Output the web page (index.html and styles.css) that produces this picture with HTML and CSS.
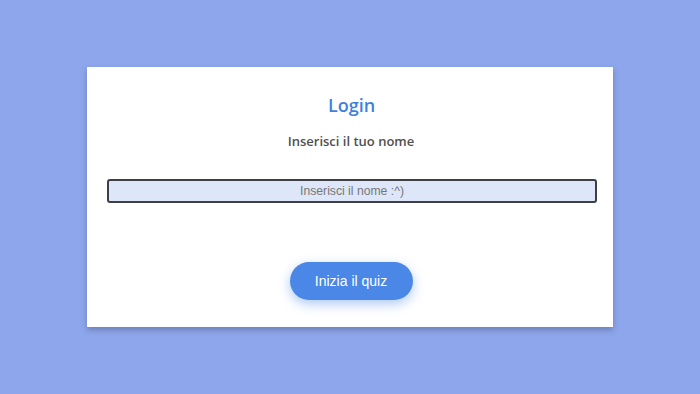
FILE: index.html
```html
<!DOCTYPE html>
<html lang="it">
<head>
  <meta charset="UTF-8">
  <meta name="viewport" content="width=device-width, initial-scale=1.0">
  <title>Quiz - Login</title>
  <link rel="stylesheet" href="styles.css">
</head>
<body>
  <div class="card">
    <h1>Login</h1>
    <p class="subtitle">Inserisci il tuo nome</p>
    <input type="text" id="nome" placeholder="Inserisci il nome :^)">
    <button class="start">Inizia il quiz</button>
  </div>
</body>
</html>
```

FILE: styles.css
```css
:root {
  --bg-color: #8ea7ec;
  --title: #3d7fe3;
  --text: #505050;
  --button-bg: #4a87e6;
  --input-bg: #dde7f9;
  --font-sans: 'Open Sans', 'Noto Sans', sans-serif;
}

*, *::before, *::after {
  box-sizing: border-box;
}

body {
  margin: 0;
  height: 394px;
  display: flex;
  align-items: center;
  justify-content: center;
  background-color: var(--bg-color);
  font-family: var(--font-sans);
}

.card {
  width: 526px;
  height: 260px;
  background: #fff;
  box-shadow: 0 3px 6px rgba(40, 50, 90, 0.35);
  padding: 26px 18px 0;
  display: flex;
  flex-direction: column;
  align-items: center;
}

h1 {
  margin: 0 0 0 3px;
  font-size: 18px;
  font-weight: 600;
  line-height: 24px;
  color: var(--title);
}

.subtitle {
  margin: 14px 0 0 2px;
  font-size: 13px;
  font-weight: 600;
  line-height: 20px;
  color: var(--text);
}

input {
  width: 490px;
  height: 24px;
  margin-top: 28px;
  margin-left: 4px;
  border: 2px solid #3d3f44;
  border-radius: 3px;
  background: var(--input-bg);
  font-family: 'Liberation Sans', Arial, sans-serif;
  font-size: 12.2px;
  text-align: center;
  outline: none;
}

input::placeholder {
  color: #777;
}

.start {
  margin-top: 59px;
  margin-left: 2px;
  width: 123px;
  height: 38px;
  border: none;
  border-radius: 19px;
  background-color: var(--button-bg);
  color: #fff;
  font-family: 'Liberation Sans', Arial, sans-serif;
  font-size: 14px;
  box-shadow: 0 4px 12px rgba(74, 135, 230, 0.45);
  cursor: pointer;
}
```
